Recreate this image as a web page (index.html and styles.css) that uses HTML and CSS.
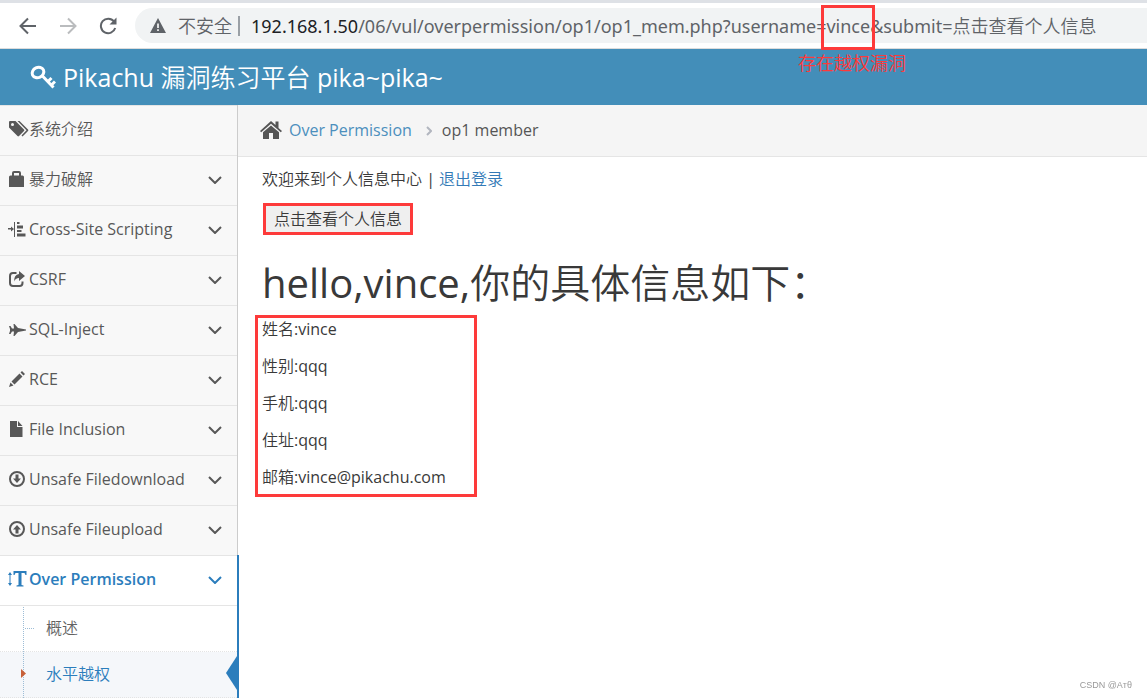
FILE: index.html
```html
<!DOCTYPE html>
<html lang="zh">

<head>
    <meta charset="UTF-8">
    <meta name="viewport" content="width=device-width, initial-scale=1.0">
    <title>Pikachu 漏洞练习平台</title>
    <link rel="stylesheet" href="styles.css">
</head>

<body>
    <div class="toolbar">
        <button class="nav-button" aria-label="Back">
            <svg width="18" height="18" viewBox="0 0 18 18"><path d="M17 9H2M9 1.5L1.5 9L9 16.5"/></svg>
        </button>
        <button class="nav-button" aria-label="Forward" disabled>
            <svg width="18" height="18" viewBox="0 0 18 18"><path d="M1 9H16M9 1.5L16.5 9L9 16.5"/></svg>
        </button>
        <button class="nav-button" aria-label="Reload">
            <svg width="18" height="18" viewBox="0 0 18 18"><path d="M15 4.5A7.3 7.3 0 1 0 16.2 11"/><path class="solid" d="M17.5 0.5V7.5H10.5Z"/></svg>
        </button>
        <div class="address">
            <svg class="warning" width="16" height="15" viewBox="0 0 16 15"><path d="M8 0L16 15H0Z"/><path class="mark" d="M7.2 5.5H8.8V10H7.2ZM7.2 11.3H8.8V13H7.2Z"/></svg>
            <span class="insecure">不安全</span>
            <span class="divider"></span>
            <label class="host" for="url">192.168.1.50</label>
            <input class="url" id="url" type="text" value="/06/vul/overpermission/op1/op1_mem.php?username=vince&amp;submit=点击查看个人信息">
            <span class="param-box"></span>
            <span class="param-note">存在越权漏洞</span>
        </div>
    </div>

    <header class="header">
        <svg width="26" height="24" viewBox="0 0 26 24"><ellipse cx="8" cy="7.500" rx="6" ry="5" transform="rotate(-25 8 7.500)"/><path d="M12 10.500L23.500 22.500M17.500 17L21.500 13M21 20.500L25 16.500"/></svg>
        <span>Pikachu 漏洞练习平台 pika~pika~</span>
    </header>

    <div class="page">
        <nav class="sidebar">
            <a class="item" href="#">
                <svg class="icon" viewBox="0 0 20 16"><path d="M0 1Q0 0 1 0H6.500L15 8.500Q15.800 9.300 15 10L10 15Q9.200 15.800 8.500 15L0 6.500ZM3.500 2A1.500 1.500 0 1 0 3.500 5A1.500 1.500 0 1 0 3.500 2Z" fill-rule="evenodd"/><path d="M8.500 0H10.500L19 8.500Q19.800 9.300 19 10L13.500 15.500L12.500 14.500L17.500 9.300Z"/></svg>
                <span>系统介绍</span>
            </a>
            <a class="item" href="#">
                <svg class="icon" viewBox="0 0 20 16"><path d="M0 6Q0 4.500 1.500 4.500H3V2Q3 0 5 0H10Q12 0 12 2V4.500H13.500Q15 4.500 15 6V16H0ZM5 4.500H10V2H5Z" fill-rule="evenodd"/></svg>
                <span>暴力破解</span>
                <svg class="arrow" viewBox="0 0 14 8"><path d="M1 1L7 7L13 1"/></svg>
            </a>
            <a class="item" href="#">
                <svg class="icon" viewBox="0 0 20 16"><path d="M5 1H6V16H5ZM-1 7H2V5.500L5 8L2 10.500V8.500H-1ZM8 1H10.500V3H8ZM8 4.500H14V7.500H8ZM8 9H12.500V11H8ZM8 12.500H16.500V15.500H8Z"/></svg>
                <span>Cross-Site Scripting</span>
                <svg class="arrow" viewBox="0 0 14 8"><path d="M1 1L7 7L13 1"/></svg>
            </a>
            <a class="item" href="#">
                <svg class="icon" viewBox="0 0 20 16"><path class="line" d="M7.500 2H4Q1 2 1 5V12Q1 15 4 15H10.500Q13.500 15 13.500 12V10.500"/><path d="M10 0L16 5L10 10V7Q6.500 7 5 10.500Q5 3.500 10 3Z"/></svg>
                <span>CSRF</span>
                <svg class="arrow" viewBox="0 0 14 8"><path d="M1 1L7 7L13 1"/></svg>
            </a>
            <a class="item" href="#">
                <svg class="icon" viewBox="0 0 20 16"><path d="M0 5H1.500L3 7.500H5L4.500 3H5.500L9 7L13 7.700L17 8.500V9.500L13 10.300L9 11L5.500 15H4.500L5 10.500H3L1.500 13H0L1 10V8Z"/></svg>
                <span>SQL-Inject</span>
                <svg class="arrow" viewBox="0 0 14 8"><path d="M1 1L7 7L13 1"/></svg>
            </a>
            <a class="item" href="#">
                <svg class="icon" viewBox="0 0 20 16"><path d="M0 16L1.500 11.500L4.500 14.500ZM2.500 10.500L10.500 2.500L13.500 5.500L5.500 13.500ZM11.500 1.500L13 0L16 3L14.500 4.500Z"/></svg>
                <span>RCE</span>
                <svg class="arrow" viewBox="0 0 14 8"><path d="M1 1L7 7L13 1"/></svg>
            </a>
            <a class="item" href="#">
                <svg class="icon" viewBox="0 0 20 16"><path d="M1 0H8V6H13.500V16H1ZM9 0L13.500 5H9Z"/></svg>
                <span>File Inclusion</span>
                <svg class="arrow" viewBox="0 0 14 8"><path d="M1 1L7 7L13 1"/></svg>
            </a>
            <a class="item" href="#">
                <svg class="icon" viewBox="0 0 20 16"><circle class="line" cx="8" cy="8" r="7"/><path d="M6.500 3.500H9.500V7.500H12L8 12L4 7.500H6.500Z"/></svg>
                <span>Unsafe Filedownload</span>
                <svg class="arrow" viewBox="0 0 14 8"><path d="M1 1L7 7L13 1"/></svg>
            </a>
            <a class="item" href="#">
                <svg class="icon" viewBox="0 0 20 16"><circle class="line" cx="8" cy="8" r="7"/><path d="M6.500 12.500H9.500V8.500H12L8 4L4 8.500H6.500Z"/></svg>
                <span>Unsafe Fileupload</span>
                <svg class="arrow" viewBox="0 0 14 8"><path d="M1 1L7 7L13 1"/></svg>
            </a>
            <div class="open">
                <a class="item active" href="#">
                    <svg class="icon" viewBox="0 0 20 16"><path d="M1 1L3 4H1.500V12H3L1 15L-1 12H0.500V4H-1ZM4.500 0H17.500V4H16.500L15.500 2H12.500V14L14.500 14.500V15.500H7.500V14.500L9.500 14V2H6.500L5.500 4H4.500Z"/></svg>
                    <span>Over Permission</span>
                    <svg class="arrow" viewBox="0 0 14 8"><path d="M1 1L7 7L13 1"/></svg>
                </a>
                <div class="submenu">
                    <a class="subitem" href="#">概述</a>
                    <a class="subitem current" href="#">水平越权</a>
                </div>
            </div>
        </nav>

        <main class="main">
            <div class="breadcrumb">
                <svg width="22" height="18" viewBox="0 0 22 18"><path d="M11 0L15.500 4V0.500H18.500V7L22 10L20.800 11.200L11 2.800L1.200 11.200L0 10Z"/><path d="M11 4.500L19 11.300V18H13V12H9V18H3V11.300Z"/></svg>
                <a href="#">Over Permission</a>
                <svg class="sep" width="6" height="10" viewBox="0 0 6 10"><path d="M1 1L5 5L1 9"/></svg>
                <span>op1 member</span>
            </div>
            <div class="content">
                <p class="welcome">欢迎来到个人信息中心 | <a href="#">退出登录</a></p>
                <button class="view-button">点击查看个人信息</button>
                <h1>hello,vince,你的具体信息如下：</h1>
                <div class="info">
                    <p>姓名:vince</p>
                    <p>性别:qqq</p>
                    <p>手机:qqq</p>
                    <p>住址:qqq</p>
                    <p>邮箱:vince@pikachu.com</p>
                </div>
            </div>
        </main>
    </div>
    <div class="watermark">CSDN @Aтθ</div>
</body>

</html>
```
FILE: styles.css
```css
* {
    box-sizing: border-box;
}

body {
    margin: 0;
    min-height: 100vh;
    display: flex;
    flex-direction: column;
    font-family: "Open Sans", "Noto Sans CJK SC DemiLight", "Noto Sans CJK SC Light", "Noto Sans CJK SC", sans-serif;
    font-size: 16px;
    line-height: 24px;
    color: #393939;
    background-color: #fff;
}

a {
    color: #337ab7;
    text-decoration: none;
}

p {
    margin: 0;
}

button,
input {
    font: inherit;
}

/* browser bar */
.toolbar {
    display: flex;
    align-items: center;
    height: 49px;
    padding-left: 19px;
    border-top: 3px solid #dee1e6;
    border-bottom: 1px solid #dcdcdc;
}

.nav-button {
    display: flex;
    margin-right: 22px;
    padding: 0;
    border: none;
    background: none;
}

.nav-button path {
    fill: none;
    stroke: #5f6368;
    stroke-width: 2;
}

.nav-button .solid {
    fill: #5f6368;
    stroke: none;
}

.nav-button:disabled path {
    stroke: #babcbe;
}

.address {
    position: relative;
    display: flex;
    flex: 1;
    align-items: center;
    height: 35px;
    margin-left: -4px;
    padding-left: 15px;
    border-radius: 18px 0 0 18px;
    background-color: #f1f3f4;
    color: #5f6368;
    font-family: "Noto Sans", "Noto Sans CJK SC DemiLight", "Noto Sans CJK SC Light", "Noto Sans CJK SC", sans-serif;
    font-size: 18px;
}

.warning {
    fill: #5f6368;
}

.warning .mark {
    fill: #fff;
}

.insecure {
    margin-left: 12px;
}

.divider {
    width: 2px;
    height: 20px;
    margin: 0 11px 0 6px;
    background-color: #9aa0a6;
}

.host {
    color: #202124;
}

.url {
    flex: 1;
    min-width: 0;
    padding: 0;
    border: none;
    background: none;
    color: #5f6368;
}

.param-box {
    position: absolute;
    left: 686px;
    top: -3px;
    width: 54px;
    height: 45px;
    border: 3px solid #fd3a3a;
}

.param-note {
    position: absolute;
    left: 663px;
    top: 43px;
    color: #fd3a3a;
}

/* header */
.header {
    display: flex;
    align-items: center;
    gap: 7px;
    height: 56px;
    padding-left: 30px;
    background-color: #438eb9;
    color: #fff;
    font-size: 25px;
}

.header svg {
    fill: none;
    stroke: #fff;
    stroke-width: 3;
}

.page {
    display: flex;
    flex: 1;
}

/* sidebar */
.sidebar {
    width: 238px;
    background-color: #f8f8f8;
    border-right: 1px solid #ccc;
}

.item {
    display: flex;
    align-items: center;
    height: 50px;
    padding: 0 15px 4px 9px;
    border-top: 1px solid #e5e5e5;
    color: #585858;
}

.icon {
    width: 20px;
    height: 16px;
    overflow: visible;
    fill: currentColor;
}

.icon .line {
    fill: none;
    stroke: currentColor;
    stroke-width: 2;
}

.arrow {
    width: 14px;
    height: 8px;
    margin: 3px 0 0 auto;
    fill: none;
    stroke: currentColor;
    stroke-width: 2;
}

.open {
    margin-right: -2px;
    border-right: 2px solid #2b7dbc;
    background-color: #fff;
}

.active {
    color: #2b7dbc;
    font-weight: 600;
}

.submenu {
    position: relative;
    border-top: 1px solid #e5e5e5;
}

.submenu::before {
    content: "";
    position: absolute;
    z-index: 1;
    left: 23px;
    top: 1px;
    bottom: 0;
    border-left: 1px dotted #9dbdd6;
}

.subitem {
    position: relative;
    display: flex;
    align-items: center;
    height: 46px;
    padding: 0 0 2px 46px;
    border-bottom: 1px dotted #e4e4e4;
    color: #616161;
}

.subitem::before {
    content: "";
    position: absolute;
    z-index: 2;
    left: 25px;
    top: 22px;
    width: 9px;
    border-top: 1px dotted #9dbdd6;
}

.subitem.current {
    background-color: #f5f7fa;
    color: #2b7dbc;
}

.subitem.current::before {
    left: 21px;
    top: 17px;
    width: 5px;
    height: 9px;
    border: none;
    background-color: #c86139;
    clip-path: polygon(0 0, 100% 50%, 0 100%);
}

.subitem.current::after {
    content: "";
    position: absolute;
    right: 0;
    top: 4px;
    width: 11px;
    height: 34px;
    background-color: #2b7dbc;
    clip-path: polygon(100% 0, 0 50%, 100% 100%);
}

/* main */
.main {
    flex: 1;
}

.breadcrumb {
    display: flex;
    align-items: center;
    height: 52px;
    padding: 0 0 2px 22px;
    border-bottom: 1px solid #e5e5e5;
    background-color: #f5f5f5;
    color: #555;
}

.breadcrumb svg {
    fill: #555;
}

.breadcrumb a {
    margin-left: 7px;
    color: #4c8fbd;
}

.breadcrumb .sep {
    margin: 3px 10px 0 14px;
    fill: none;
    stroke: #b2b6bf;
    stroke-width: 2;
}

.content {
    padding: 10px 24px;
}

.view-button {
    display: block;
    height: 32px;
    margin: 12px 0 0 1px;
    padding: 0 8px;
    border: 3px solid #fd3a3a;
    background-color: #efefef;
    color: #393939;
}

h1 {
    margin: 24px 0 8px;
    font-size: 40px;
    font-weight: 400;
    line-height: 48px;
}

.info {
    display: flex;
    flex-direction: column;
    gap: 15px;
    width: 222px;
    margin-left: -7px;
    padding: 0 4px 6px;
    border: 3px solid #fd3a3a;
    line-height: 22px;
}

.watermark {
    position: fixed;
    right: 15px;
    bottom: 5px;
    color: #999;
    font-family: "Liberation Sans", sans-serif;
    font-size: 9px;
    line-height: 16px;
}
```
